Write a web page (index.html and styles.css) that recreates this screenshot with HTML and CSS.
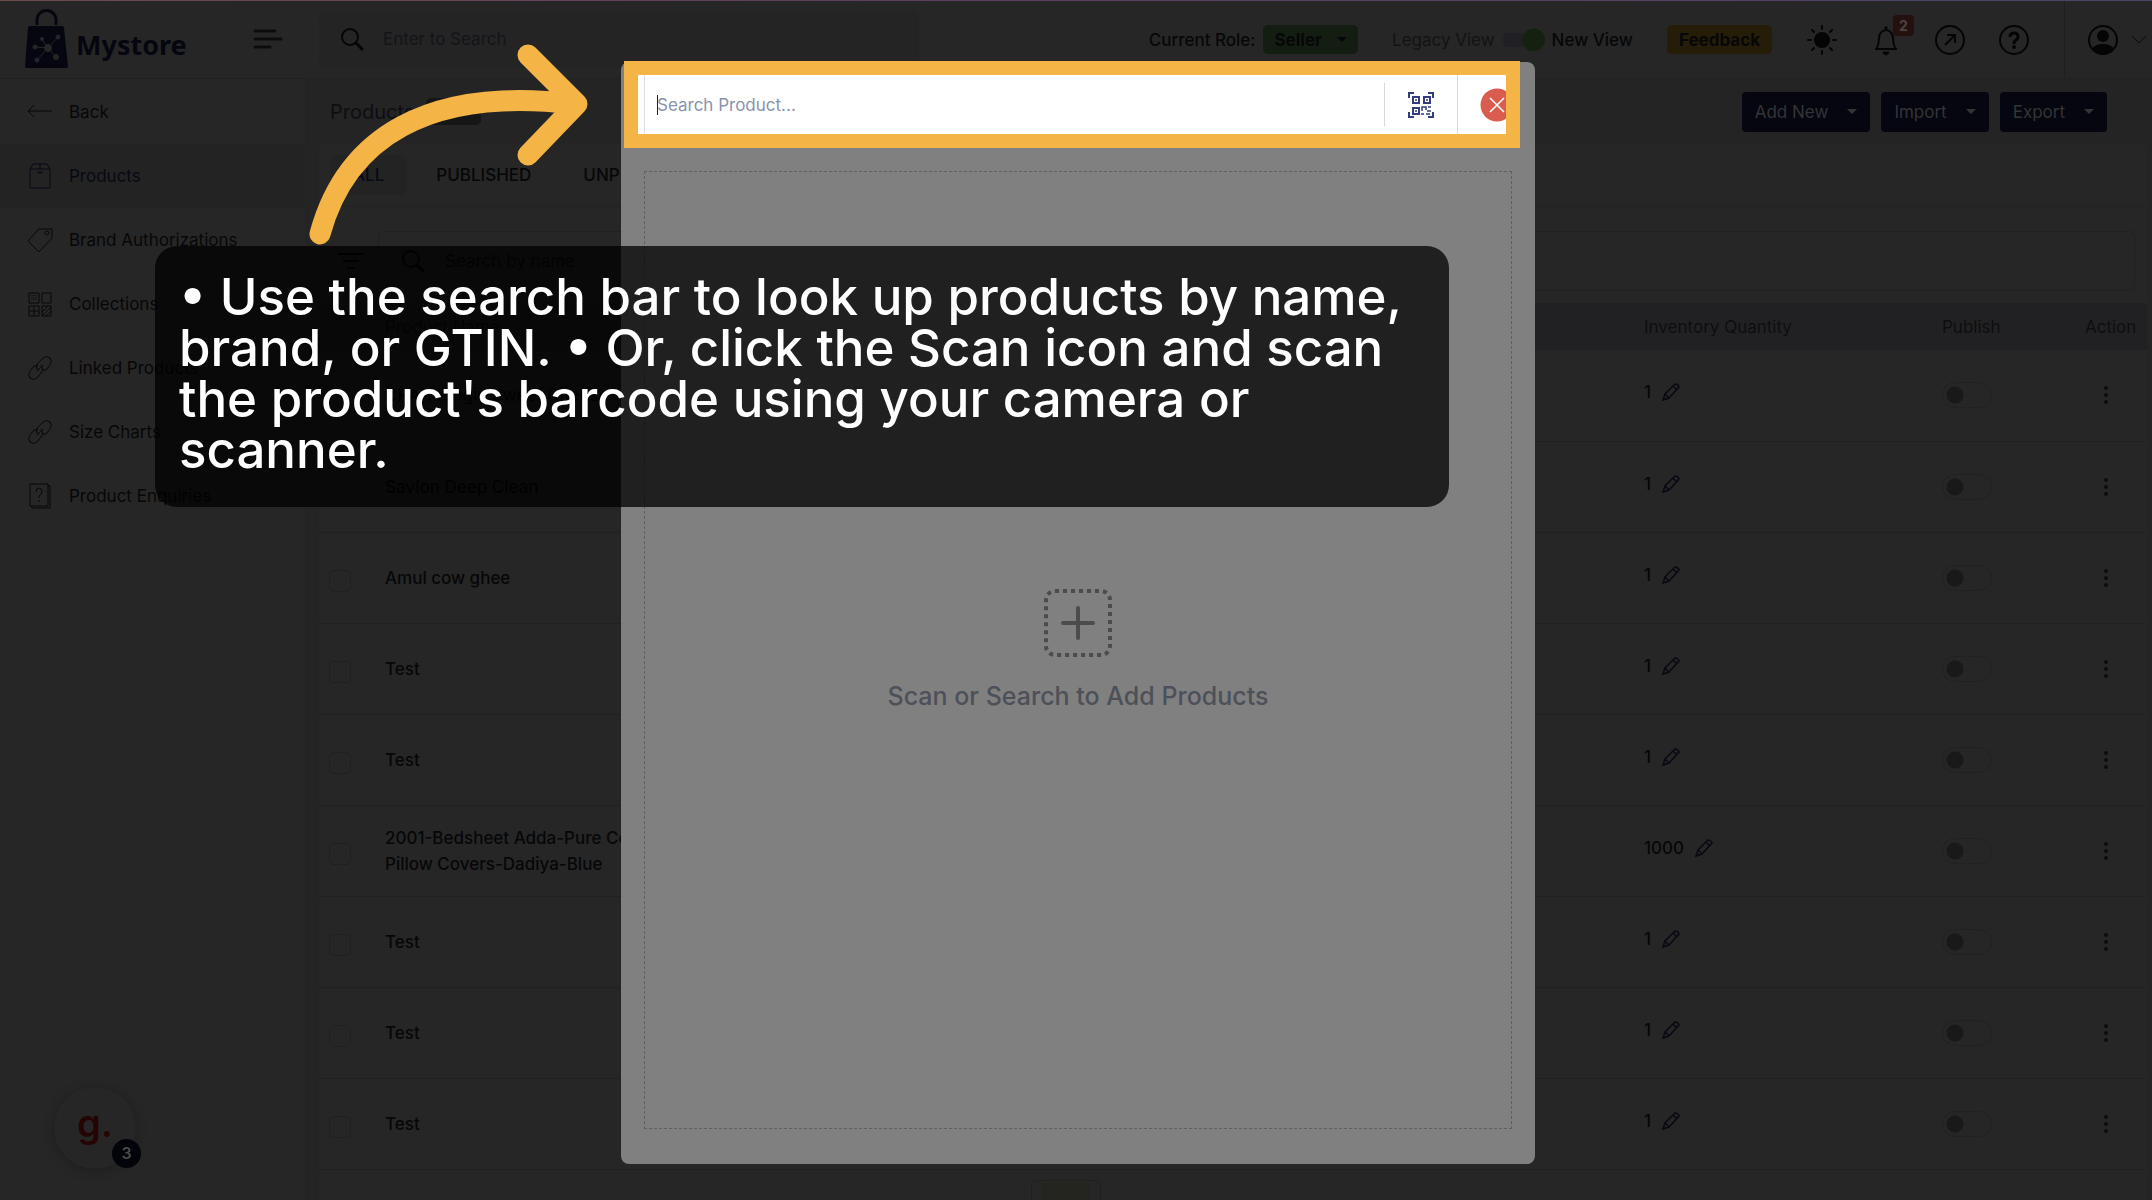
FILE: index.html
```html
<!DOCTYPE html>
<html lang="en">
<head>
  <meta charset="UTF-8" />
  <meta name="viewport" content="width=device-width, initial-scale=1.0"/>
  <title>Mystore - Products</title>
  <link rel="stylesheet" href="styles.css">
</head>
<body>
  <div class="app">
    <aside class="sidebar">
      <div class="brand">
        <svg class="logo" width="43" height="60" viewBox="0 0 43 60">
          <path d="M12 16V11a9.500 9.500 0 0 1 19 0v5" fill="none" stroke="#05060f" stroke-width="3"/>
          <path d="M5 17h32q2 0 2 2l4 38q0 2-2 2H2q-2 0-2-2l3-38q0-2 2-2z" fill="#05060f"/>
          <g stroke="#262626" stroke-width="1" fill="#262626">
            <path d="M23 39L33 28M23 39L17 30M23 39L10 38M23 39L12 51M23 39L31 48" />
            <circle cx="23" cy="39" r="3.500"/><circle cx="33" cy="28" r="2"/><circle cx="17" cy="30" r="1.500"/>
            <circle cx="10" cy="38" r="2"/><circle cx="12" cy="51" r="2"/><circle cx="31" cy="48" r="2.500"/>
          </g>
        </svg>
        <span class="brand-name">Mystore</span>
        <button class="icon-btn" aria-label="Toggle menu">
          <svg width="30" height="20" viewBox="0 0 30 20" stroke="#0c0c0c" stroke-width="3" stroke-linecap="round"><path d="M2 2h20M2 10h26M2 18h15"/></svg>
        </button>
      </div>
      <nav class="side-nav">
        <a href="#"><svg viewBox="0 0 26 26"><path d="M25 12H1M7 6l-6 6 6 6"/></svg>Back</a>
        <a href="#" class="active"><svg viewBox="0 0 26 28"><path d="M3 7h20v19H3zM3 7l3-5h14l3 5M13 2v5M11 10h4v1h-4z"/></svg>Products</a>
        <a href="#"><svg viewBox="0 0 26 26"><path d="M12 2h13v9L12 25 1 14z"/><circle cx="20" cy="6" r="2"/></svg>Brand Authorizations</a>
        <a href="#"><svg viewBox="0 0 26 26"><path d="M2 2h10v10H2zM15 2h9v10h-9zM2 15h10v10H2zM15 15h9v10h-9z"/><path d="M5 4v6M7 4v6M9 4v6" stroke-dasharray="1 1"/><path d="M7 16v8M3 20h8M15 21l6-6M15 25l9-9M19 25l5-5"/></svg>Collections</a>
        <a href="#"><svg viewBox="0 0 26 26"><path d="M11 15l-1-1q-2-3 1-6l5-5q4-3 7 0t0 7l-4 5h-4M14 10l1 2q2 3-1 6l-4 5q-4 3-7 0t0-7l4-5h4M10 16l6-6"/></svg>Linked Products</a>
        <a href="#"><svg viewBox="0 0 26 26"><path d="M11 15l-1-1q-2-3 1-6l5-5q4-3 7 0t0 7l-4 5h-4M14 10l1 2q2 3-1 6l-4 5q-4 3-7 0t0-7l4-5h4M10 16l6-6"/></svg>Size Charts</a>
        <a href="#"><svg viewBox="0 0 26 28"><path d="M3 2h18v22H3zM21 4h2v22H5v-2M9 10q0-4 3-4t3 4q0 2-3 4v2M12 18v2"/></svg>Product Enquiries</a>
      </nav>
    </aside>

    <div class="main">
      <header class="topbar">
        <div class="top-search">
          <svg class="search-icon" viewBox="0 0 24 24"><circle cx="10" cy="10" r="8"/><path d="M16 16l6 6" stroke-width="3"/></svg>
          <input type="text" aria-label="Search" placeholder="Enter to Search" />
        </div>
        <div class="top-tools">
          <span class="role-label">Current Role:</span>
          <button class="role">Seller <i class="caret"></i></button>
          <span class="legacy">Legacy View</span>
          <label class="view-switch"><input type="checkbox" checked />New View</label>
          <button class="feedback">Feedback</button>
          <div class="top-icons">
            <button class="icon-btn" aria-label="Theme"><svg width="32" height="32" viewBox="0 0 32 32" stroke="#050505" stroke-width="2" stroke-linecap="round"><circle cx="16" cy="16" r="7" fill="#050505"/><path d="M16 2v3M16 27v3M2 16h3M27 16h3M6 6l2 2M24 24l2 2M6 26l2-2M24 8l2-2"/></svg></button>
            <button class="icon-btn bell" aria-label="Notifications"><svg width="32" height="32" viewBox="0 0 32 32" fill="none" stroke="#050505" stroke-width="2"><path d="M5 25h22M7 24q2-5 2-10a7 8 0 0 1 14 0q0 5 2 10"/><path d="M13 28h6q-1 3-3 3t-3-3zM15 3h2v2h-2z" fill="#050505" stroke-width="1"/></svg><span class="count">2</span></button>
            <button class="icon-btn" aria-label="Open store"><svg width="32" height="32" viewBox="0 0 32 32" fill="none" stroke="#050505" stroke-width="2"><circle cx="16" cy="16" r="14"/><path d="M11 21l10-10M13 11h8v8"/></svg></button>
            <button class="icon-btn" aria-label="Help"><svg width="32" height="32" viewBox="0 0 32 32" fill="none" stroke="#050505" stroke-width="2"><circle cx="16" cy="16" r="14"/><path d="M12 13q0-4 4-4t4 4q0 2-2 3t-2 4" stroke-width="3"/><circle cx="16" cy="23" r="1"/></svg></button>
          </div>
          <div class="account">
            <button class="icon-btn" aria-label="Account"><svg width="32" height="32" viewBox="0 0 32 32"><circle cx="16" cy="16" r="14" fill="none" stroke="#050505" stroke-width="2"/><circle cx="16" cy="12" r="6" fill="#050505"/><path d="M5 25q3-5 11-5t11 5q-5 6-11 6T5 25z" fill="#050505"/></svg></button>
            <svg width="16" height="10" viewBox="0 0 16 10" fill="none" stroke="#0a0a0a"><path d="M1 1l7 7 7-7"/></svg>
          </div>
        </div>
      </header>

      <div class="page-head">
        <h1>Products</h1><span class="total"></span>
        <div class="actions">
          <button>Add New <i class="caret"></i></button>
          <button>Import <i class="caret"></i></button>
          <button>Export <i class="caret"></i></button>
        </div>
      </div>

      <section class="card">
        <div class="tabs">
          <button class="active">ALL</button>
          <button>PUBLISHED</button>
          <button>UNPUBLISHED</button>
        </div>
        <div class="filters">
          <button class="icon-btn" aria-label="Filter"><svg width="26" height="18" viewBox="0 0 26 18" stroke="#030303" stroke-width="2"><path d="M0 2h26M5 9h16M9 16h8"/></svg></button>
          <div class="filter-search">
            <svg class="search-icon" viewBox="0 0 24 24"><circle cx="10" cy="10" r="8"/><path d="M16 16l6 6" stroke-width="3"/></svg>
            <input type="text" aria-label="Search by name" placeholder="Search by name" />
          </div>
        </div>
        <table>
          <thead>
            <tr><th class="check"></th><th>Product Name</th><th class="qty">Inventory Quantity</th><th class="publish">Publish</th><th class="action">Action</th></tr>
          </thead>
          <tbody id="rows"></tbody>
        </table>
        <div class="pager"><button aria-label="Page 1"><span></span></button></div>
      </section>
    </div>
  </div>

  <button class="launcher" aria-label="Guides">g.<span>3</span></button>

  <div class="overlay">
    <div class="modal" role="dialog" aria-label="Add products">
      <div class="spotlight">
        <input type="text" aria-label="Search product" placeholder="Search Product..." />
        <button class="scan" aria-label="Scan">
          <svg width="28" height="28" viewBox="0 0 28 28" fill="none" stroke="#323c80" stroke-width="2">
            <path d="M2 7V2h5M21 2h5v5M26 21v5h-5M7 26H2v-5" />
            <path d="M6 6h6v6H6zM17 6h6v6h-6zM6 17h6v6H6z"/>
            <path d="M8 9h2M19 9h2M8 20h2M15 20v-4h4v3M21 16h3M20 20h4M14 23h3M19 23h4" stroke-width="1.500"/>
          </svg>
        </button>
        <button class="close" aria-label="Close"><svg width="34" height="34" viewBox="0 0 34 34"><circle cx="17" cy="17" r="16.500" fill="#d95c4e"/><path d="M10 10l14 14M24 10L10 24" stroke="#fff" stroke-width="1.500"/></svg></button>
      </div>
      <div class="dropzone">
        <svg width="68" height="70" viewBox="0 0 68 70" fill="none" stroke="#4c4c4f" stroke-width="4">
          <rect x="2" y="3" width="64" height="64" rx="9" stroke-dasharray="4 4"/>
          <path d="M34 20v30M19 35h30" stroke-linecap="round"/>
        </svg>
        <p>Scan or Search to Add Products</p>
      </div>
    </div>
  </div>

  <div class="callout">• Use the search bar to look up products by name,<br>brand, or GTIN. • Or, click the Scan icon and scan<br>the product's barcode using your camera or<br>scanner.</div>
  <svg class="arrow" width="290" height="210" viewBox="0 0 290 210" fill="none" stroke="#f4b446" stroke-width="21" stroke-linecap="round" stroke-linejoin="round">
    <path d="M20 194C46 98 128 46 274 64M228 15l49 49-49 51"/>
  </svg>

  <script>
    const products = [
      { name: "CRAX Ringie Sweet Cheese", qty: 1 },
      { name: "Savlon Deep Clean", qty: 1 },
      { name: "Amul cow ghee", qty: 1 },
      { name: "Test", qty: 1 },
      { name: "Test", qty: 1 },
      { name: "2001-Bedsheet Adda-Pure Cotton<br>Pillow Covers-Dadiya-Blue", qty: 1000 },
      { name: "Test", qty: 1 },
      { name: "Test", qty: 1 },
      { name: "Test", qty: 1 },
    ];

    const pencil = `<svg width="20" height="20" viewBox="0 0 20 20" fill="none" stroke="#080912" stroke-width="1.500"><path d="M2 18l2-6L14 2q3 0 4 3L8 16zM4 12l4 4M12 4l4 4"/></svg>`;

    document.getElementById("rows").innerHTML = products.map(p => `
      <tr>
        <td class="check"><input type="checkbox" aria-label="Select product" /></td>
        <td class="name">${p.name}</td>
        <td class="qty"><div class="qty-cell">${p.qty} <button class="icon-btn" aria-label="Edit quantity">${pencil}</button></div></td>
        <td class="publish"><input type="checkbox" class="switch" aria-label="Publish" /></td>
        <td class="action"><button class="dots" aria-label="More"><i></i><i></i><i></i></button></td>
      </tr>`).join("");
  </script>
</body>
</html>
```

FILE: styles.css
```css
* {
  box-sizing: border-box;
}

body {
  margin: 0;
  height: 100vh;
  overflow: hidden;
  font-family: Inter, "Liberation Sans", sans-serif;
  font-size: 17px;
  color: #060708;
  background: #242424;
}

body::before {
  content: "";
  position: absolute;
  top: 0;
  left: 0;
  right: 0;
  height: 1px;
  background: linear-gradient(90deg, #6b4a4c, #5e3f5e 40%, #4c4466);
  z-index: 5;
}

button, input {
  font: inherit;
  color: inherit;
}

button {
  border: none;
  background: none;
  padding: 0;
  cursor: pointer;
}

.icon-btn {
  display: flex;
}

.caret {
  border: 5px solid transparent;
  border-top-color: currentColor;
  border-bottom: none;
}

.search-icon {
  width: 24px;
  height: 24px;
  fill: none;
  stroke: #050505;
  stroke-width: 2;
  stroke-linecap: round;
}

.app {
  display: flex;
  height: 100%;
}

/* sidebar */
.sidebar {
  width: 305px;
  flex: none;
  background: #262626;
}

.brand {
  height: 79px;
  display: flex;
  align-items: center;
  padding: 0 22px 0 25px;
  border-bottom: 1px solid #212121;
}

.brand-name {
  margin: 10px auto 0 8px;
  font-family: "Noto Sans", sans-serif;
  font-size: 27px;
  font-weight: bold;
  color: #05060f;
}

.side-nav {
  padding-top: 1px;
}

.side-nav a {
  display: flex;
  align-items: center;
  gap: 16px;
  height: 64px;
  padding-left: 27px;
  color: inherit;
  text-decoration: none;
}

.side-nav svg {
  width: 26px;
  height: 28px;
  fill: none;
  stroke: #070707;
}

.side-nav .active {
  background: #232323;
  color: #080914;
}

.side-nav .active svg {
  stroke: #080914;
}

/* header */
.main {
  flex: 1;
  min-width: 0;
}

.topbar {
  height: 79px;
  display: flex;
  align-items: center;
  justify-content: space-between;
  padding-left: 14px;
  background: #262626;
  border-bottom: 1px solid #212121;
}

.top-search {
  width: 600px;
  height: 57px;
  display: flex;
  align-items: center;
  gap: 19px;
  padding-left: 21px;
  border-radius: 6px;
  background: #242424;
}

.top-search input, .filter-search input {
  flex: 1;
  border: none;
  outline: none;
  background: none;
  padding: 0;
}

.top-search input::placeholder {
  color: #131419;
}

.top-tools {
  display: flex;
  align-items: center;
  height: 100%;
  padding-top: 1px;
}

.role-label {
  margin-right: 8px;
  font-weight: 500;
}

.role, .feedback {
  height: 29px;
  padding: 0 12px;
  border-radius: 5px;
  font-weight: 700;
}

.role {
  display: flex;
  align-items: center;
  gap: 15px;
  margin-right: 34px;
  padding: 0 11px;
  background: #141d12;
}

.legacy {
  color: #131313;
}

.view-switch {
  display: flex;
  align-items: center;
  gap: 7px;
  margin: 0 34px 0 8px;
  font-weight: 500;
}

.view-switch input {
  appearance: none;
  margin: 0;
  width: 42px;
  height: 23px;
  background: radial-gradient(circle at 31px 12px, #142110 11px, transparent 12px), linear-gradient(#202024, #202024) 0 50% / 32px 14px no-repeat;
  border-radius: 12px;
}

.feedback {
  background: #261d09;
}

.top-icons {
  display: flex;
  gap: 32px;
  margin: 0 34px;
}

.bell {
  position: relative;
}

.count {
  position: absolute;
  top: -9px;
  right: -12px;
  width: 21px;
  height: 21px;
  line-height: 21px;
  border-radius: 4px;
  font-size: 14px;
  font-weight: 700;
  background: #24100e;
  color: #4b4444;
}

.account {
  display: flex;
  align-items: center;
  gap: 12px;
  height: 100%;
  padding: 0 5px 0 22px;
  border-left: 1px solid #1f1f1f;
}

.page-head {
  display: flex;
  align-items: center;
  gap: 12px;
  height: 65px;
  padding: 0 45px 0 25px;
}

.page-head h1 {
  margin: 0;
  font-size: 20px;
  font-weight: 400;
  color: #0d0e12;
}

.total {
  width: 55px;
  height: 27px;
  border-radius: 5px;
  background: #161616;
}

.actions {
  display: flex;
  gap: 11px;
  margin-left: auto;
}

.actions button {
  display: flex;
  align-items: center;
  gap: 19px;
  height: 40px;
  padding: 0 13px;
  border-radius: 4px;
  background: #05060f;
  color: #343436;
}

/* product list */
.card {
  margin: 0 5px 0 14px;
  background: #262626;
  border-radius: 6px;
}

.tabs {
  display: flex;
  align-items: center;
  gap: 6px;
  height: 63px;
  padding-left: 11px;
  border-bottom: 1px solid #222;
}

.tabs button {
  height: 40px;
  padding: 0 23px;
  border-radius: 6px;
  font-weight: 500;
}

.tabs .active {
  background: #232323;
  color: #080914;
}

.filters {
  display: flex;
  align-items: start;
  gap: 14px;
  height: 96px;
  padding: 12px 12px 0 19px;
}

.filters .icon-btn {
  margin-top: 33px;
}

.filter-search {
  flex: 1;
  display: flex;
  align-items: center;
  gap: 20px;
  height: 60px;
  margin-top: 12px;
  padding-left: 22px;
  border: 1px solid #212121;
  border-radius: 6px;
}

.filter-search input::placeholder {
  color: #0a0a0c;
}

table {
  width: 100%;
  border-collapse: collapse;
  table-layout: fixed;
}

th {
  height: 47px;
  padding: 0;
  text-align: left;
  font-weight: 400;
  color: #0e0e11;
  background: #212123;
}

td {
  height: 91px;
  padding: 0;
  font-weight: 500;
  line-height: 26px;
  border-bottom: 1px solid #212121;
}

.check {
  width: 66px;
  padding-left: 10px;
}

.check input {
  display: block;
  appearance: none;
  width: 22px;
  height: 22px;
  margin: 6px 0 0;
  border: 1px solid #202020;
  border-radius: 5px;
}

.qty {
  width: 298px;
}

.publish {
  width: 143px;
}

.action {
  width: 62px;
}

.qty-cell {
  display: flex;
  align-items: center;
  gap: 10px;
  padding-bottom: 6px;
}

.switch {
  display: block;
  appearance: none;
  width: 50px;
  height: 26px;
  margin: 0;
  border: 1px solid #212121;
  border-radius: 13px;
  background: radial-gradient(circle at 12px 12px, #191919 8px, transparent 9px);
}

.dots {
  display: flex;
  flex-direction: column;
  gap: 3px;
  margin-left: 19px;
}

.dots i {
  width: 4px;
  height: 4px;
  border-radius: 50%;
  background: #0d0d0d;
}

.pager {
  display: flex;
  justify-content: center;
  padding: 10px 334px 0 0;
}

.pager button {
  width: 70px;
  height: 46px;
  padding: 1px 10px;
  border: 1px solid #202020;
  border-radius: 5px;
}

.pager span {
  display: block;
  height: 100%;
  background: #252520;
}

.launcher {
  position: fixed;
  left: 54px;
  bottom: 31px;
  width: 82px;
  height: 82px;
  padding-bottom: 10px;
  border-radius: 50%;
  background: #262626;
  box-shadow: 0 2px 10px #1e1e1e;
  font-size: 38px;
  font-weight: 600;
  color: #250404;
}

.launcher span {
  position: absolute;
  right: -5px;
  bottom: 1px;
  width: 29px;
  height: 29px;
  border-radius: 50%;
  background: #020409;
  font-size: 16px;
  line-height: 29px;
  color: #4c4c4c;
}

/* modal */
.overlay {
  position: fixed;
  inset: 0;
  display: flex;
  justify-content: center;
  padding: 62px 0 36px 4px;
}

.modal {
  display: flex;
  flex-direction: column;
  width: 914px;
  padding-bottom: 35px;
  border-radius: 8px;
  background: #808080;
}

.spotlight {
  display: flex;
  align-items: center;
  height: 87px;
  margin: -1px 15px 23px 3px;
  padding-left: 6px;
  border: 14px solid #f4b446;
  background: #fff;
  overflow: hidden;
}

/* empty field with its text cursor at the start */
.spotlight input {
  flex: 1;
  align-self: stretch;
  padding: 0 0 0 12px;
  border: none;
  border-left: 1px solid #dcdfe8;
  outline: none;
  background: linear-gradient(#1c2233, #1c2233) 12px 50% / 1px 20px no-repeat;
}

.spotlight input::placeholder {
  color: #8a93ad;
}

.scan {
  height: 43px;
  padding: 0 22px;
  border-left: 1px solid #d8d8dc;
}

.scan svg {
  display: block;
}

.close {
  display: flex;
  align-items: center;
  align-self: stretch;
  padding-left: 22px;
  margin-right: -8px;
  border-left: 1px solid #d5d9e8;
}

.dropzone {
  flex: 1;
  display: flex;
  flex-direction: column;
  align-items: center;
  justify-content: center;
  gap: 22px;
  margin: 0 23px;
  border: 1px dashed #606060;
}

.dropzone p {
  margin: 0;
  font-size: 25px;
  font-weight: 500;
  line-height: 32px;
  color: #4d5059;
}

/* guide step */
.callout {
  position: absolute;
  left: 155px;
  top: 246px;
  width: 1294px;
  height: 261px;
  padding: 25px 24px;
  border-radius: 22px;
  background: rgba(0, 0, 0, 0.75);
  color: #fff;
  font-size: 51px;
  font-weight: 500;
  line-height: 51px;
  white-space: nowrap;
}

.arrow {
  position: absolute;
  left: 300px;
  top: 40px;
}
```
